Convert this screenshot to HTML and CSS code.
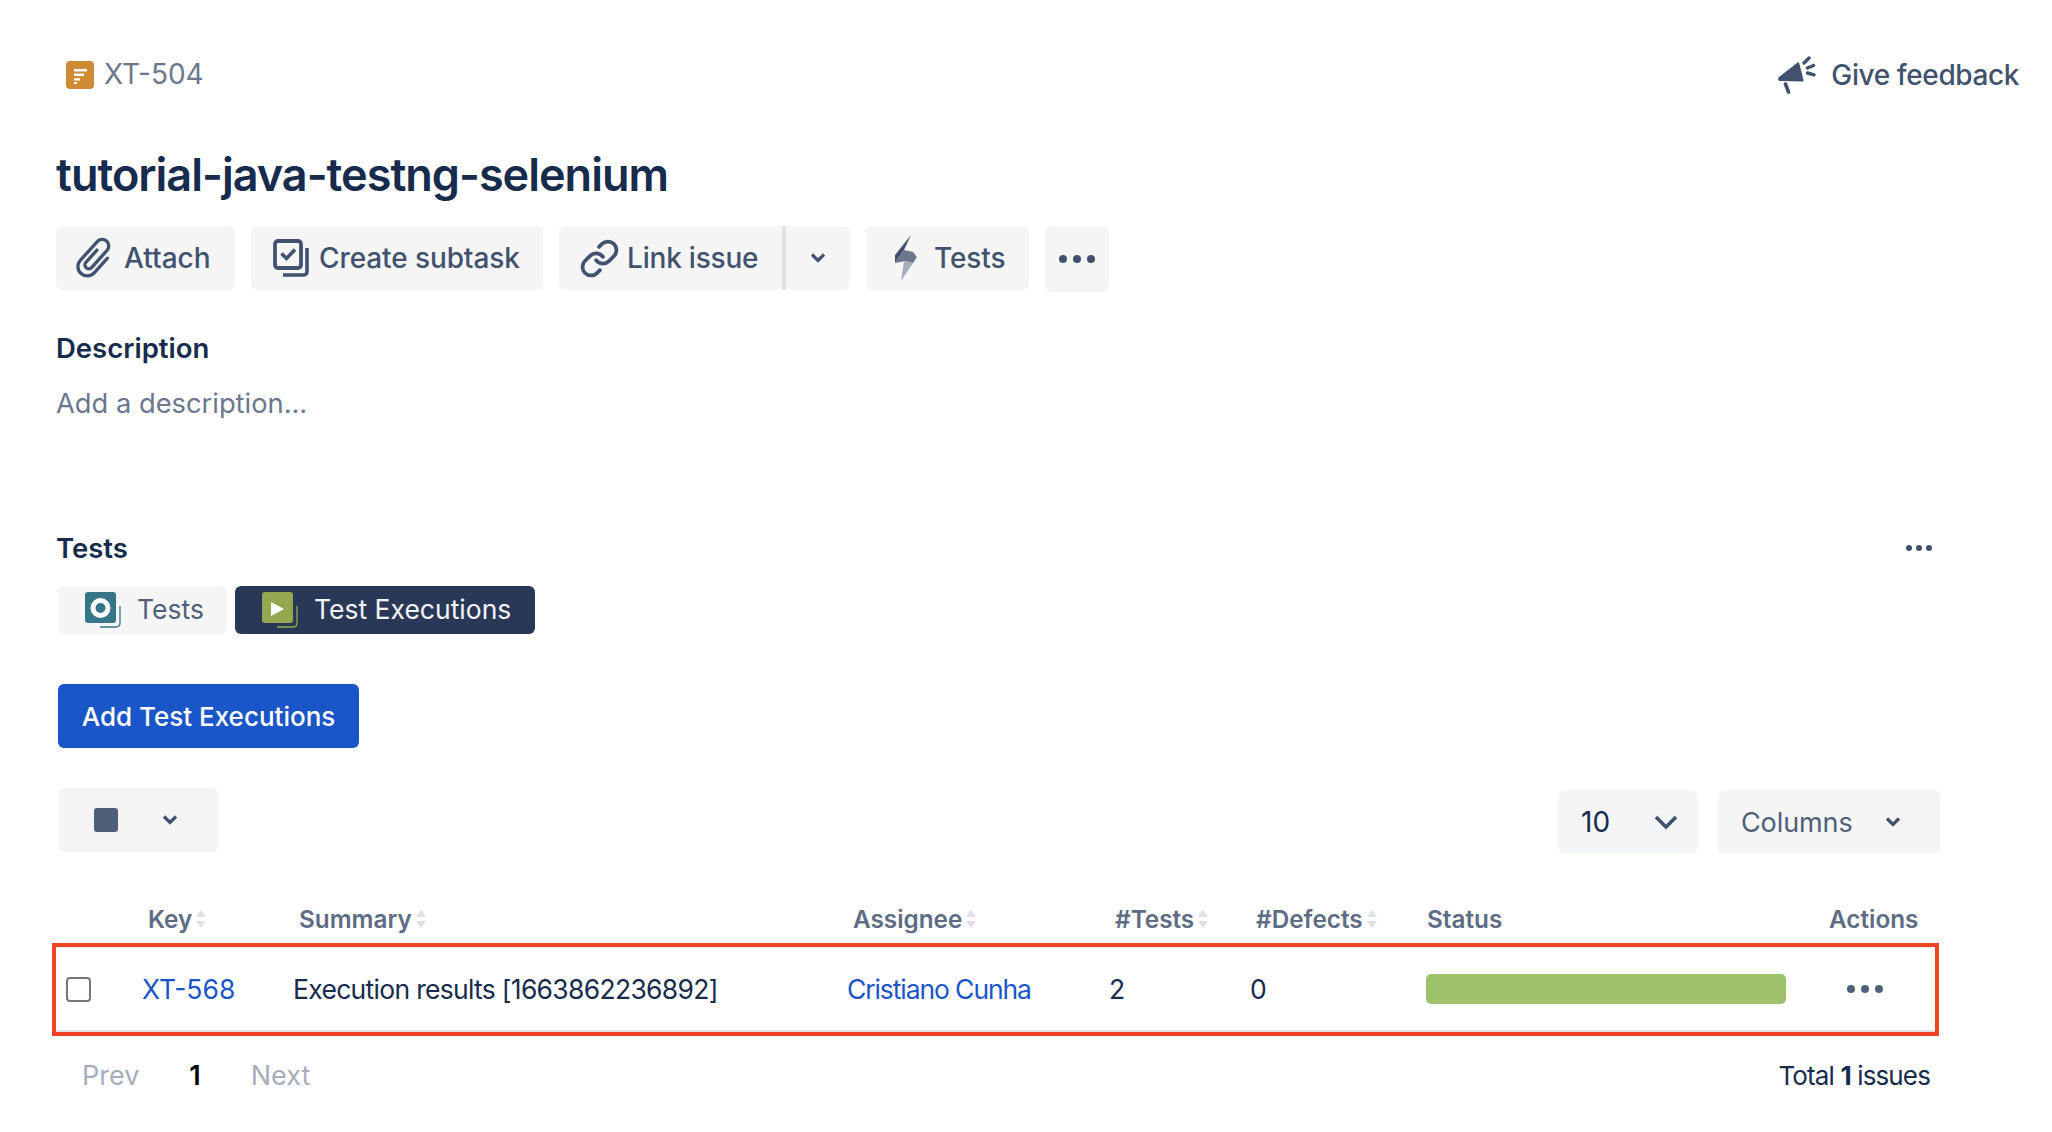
FILE: index.html
```html
<!DOCTYPE html>
<html lang="en">
<head>
<meta charset="utf-8">
<title>XT-504</title>
<link rel="stylesheet" href="styles.css">
</head>
<body>
<div class="page">
  <header class="topbar">
    <div class="crumb">
      <svg class="crumb-icon" viewBox="0 0 28 28"><rect width="28" height="28" rx="4" fill="#cf8a33"/><path d="M8 8h13v2.4H8zM8 12.6h10V15H8zM8 17.2h6v2.4H8zM8 21h3v2H8z" fill="#fff"/></svg>
      <span class="crumb-text">XT-504</span>
    </div>
    <div class="feedback">
      <svg class="feedback-icon" viewBox="0 0 38 38"><path d="M1 21 19 7c1-1 2-.8 2.300.5L25.500 24c.3 1-.2 1.500-1.200 1.500L2.500 25C0 25-.5 22.500 1 21z" fill="#42526e"/><path d="M7.500 28l3 8" stroke="#42526e" stroke-width="3.600" stroke-linecap="round" fill="none"/><path d="M26 7l5-5M29.500 12l6-2.500M29.500 17l6.500 1.800" stroke="#42526e" stroke-width="3.400" stroke-linecap="round" fill="none"/></svg>
      <span>Give feedback</span>
    </div>
  </header>

  <h1 class="title">tutorial-java-testng-selenium</h1>

  <div class="actions">
    <button class="act act-attach">
      <svg class="clip" viewBox="-20 -20 40 40"><g transform="rotate(42)"><path d="M-3.500 -6.500V8.500a3.500 3.500 0 0 0 7 0V-12.500a6 6 0 0 0 -12 0V10.500a8.500 8.500 0 0 0 17 0V-7.500" fill="none" stroke="#42526e" stroke-width="3" stroke-linecap="round"/></g></svg>
      <span>Attach</span>
    </button>
    <button class="act act-sub">
      <svg class="act-icon" viewBox="0 0 38 38"><rect x="3" y="2" width="26" height="27" rx="3" fill="none" stroke="#42526e" stroke-width="3.800"/><path d="M9.500 14.500l5 5 8.500-9" fill="none" stroke="#42526e" stroke-width="3.600"/><path d="M35 9v23c0 3-1 4-4 4H11" fill="none" stroke="#42526e" stroke-width="3.600"/></svg>
      <span>Create subtask</span>
    </button>
    <div class="split">
      <button class="act act-link">
        <svg class="link-icon" viewBox="0 0 24 24"><path d="M10 13a5 5 0 0 0 7.540.54l3-3a5 5 0 0 0-7.070-7.070l-1.720 1.710" fill="none" stroke="#42526e" stroke-width="2.200" stroke-linecap="round"/><path d="M14 11a5 5 0 0 0-7.540-.54l-3 3a5 5 0 0 0 7.070 7.070l1.710-1.710" fill="none" stroke="#42526e" stroke-width="2.200" stroke-linecap="round"/></svg>
        <span>Link issue</span>
      </button>
      <button class="act act-more">
        <svg class="chev-small" viewBox="0 0 16 12"><path d="M2 2.500l6 6 6-6" fill="none" stroke="#42526e" stroke-width="3.200"/></svg>
      </button>
    </div>
    <button class="act act-tests">
      <svg class="bolt" viewBox="0 0 22 46"><path d="M16 0 0 20v8l9-13z" fill="#42526e"/><path d="M0 28 9 15l9 2 4 5-4 6-8-2z" fill="#6b778c"/><path d="M6 46 18 28l-9-2z" fill="#a5adba"/></svg>
      <span>Tests</span>
    </button>
    <button class="act act-dots" aria-label="More">
      <span class="dots"><i></i><i></i><i></i></span>
    </button>
  </div>

  <h2 class="label desc-label">Description</h2>
  <p class="desc">Add a description...</p>

  <div class="tests-head">
    <h2 class="label">Tests</h2>
    <span class="dots dots-small"><i></i><i></i><i></i></span>
  </div>

  <div class="inner">
    <div class="tabs">
      <button class="tab">
        <svg class="tab-icon" viewBox="0 0 36 36"><rect width="31" height="31" rx="3" fill="#377587"/><circle cx="15.500" cy="16" r="7.500" fill="none" stroke="#fff" stroke-width="5"/><path d="M35 14v17c0 3-1 4-4 4H15" fill="none" stroke="#377587" stroke-width="1.300"/></svg>
        <span>Tests</span>
      </button>
      <button class="tab tab-on">
        <svg class="tab-icon" viewBox="0 0 36 36"><rect width="31" height="31" rx="3" fill="#94a84f"/><path d="M9 10l13 7-13 7z" fill="#fff"/><path d="M35 14v17c0 3-1 4-4 4H15" fill="none" stroke="#94a84f" stroke-width="1.300"/></svg>
        <span>Test Executions</span>
      </button>
    </div>

    <button class="add">Add Test Executions</button>

    <div class="toolbar">
      <button class="bulk">
        <span class="bulk-square"></span>
        <svg class="chev-small" viewBox="0 0 16 12"><path d="M2 2.500l6 6 6-6" fill="none" stroke="#42526e" stroke-width="3.200"/></svg>
      </button>
      <div class="toolbar-right">
        <button class="pager-size">
          <span>10</span>
          <svg class="chev-big" viewBox="0 0 24 16"><path d="M2 3l10 10L22 3" fill="none" stroke="#42526e" stroke-width="3.600"/></svg>
        </button>
        <button class="cols">
          <span>Columns</span>
          <svg class="chev-small" viewBox="0 0 16 12"><path d="M2 2.500l6 6 6-6" fill="none" stroke="#42526e" stroke-width="3.200"/></svg>
        </button>
      </div>
    </div>
  </div>

  <div class="grid grid-head">
    <span></span>
    <span class="th">Key<svg class="sort" viewBox="0 0 12 18"><path d="M6 0l5 7H1zM6 18l-5-7h10z" fill="#dfe1e6"/></svg></span>
    <span class="th">Summary<svg class="sort" viewBox="0 0 12 18"><path d="M6 0l5 7H1zM6 18l-5-7h10z" fill="#dfe1e6"/></svg></span>
    <span class="th">Assignee<svg class="sort" viewBox="0 0 12 18"><path d="M6 0l5 7H1zM6 18l-5-7h10z" fill="#dfe1e6"/></svg></span>
    <span class="th">#Tests<svg class="sort" viewBox="0 0 12 18"><path d="M6 0l5 7H1zM6 18l-5-7h10z" fill="#dfe1e6"/></svg></span>
    <span class="th">#Defects<svg class="sort" viewBox="0 0 12 18"><path d="M6 0l5 7H1zM6 18l-5-7h10z" fill="#dfe1e6"/></svg></span>
    <span class="th th-status">Status</span>
    <span class="th th-actions">Actions</span>
  </div>

  <div class="row-frame">
    <div class="grid grid-row">
      <span class="check"></span>
      <a class="link key">XT-568</a>
      <span class="summary">Execution results [1663862236892]</span>
      <a class="link assignee">Cristiano Cunha</a>
      <span class="num">2</span>
      <span class="num">0</span>
      <span class="bar"></span>
      <span class="dots dots-row"><i></i><i></i><i></i></span>
    </div>
  </div>

  <footer class="pagination">
    <div class="pages">
      <span class="off">Prev</span>
      <b class="cur">1</b>
      <span class="off">Next</span>
    </div>
    <div class="total">Total <b>1</b> issues</div>
  </footer>
</div>
</body>
</html>
```

FILE: styles.css
```css
* { box-sizing: border-box; }
html, body { margin: 0; background: #fff; }
body { font-family: Inter, "Liberation Sans", sans-serif; color: #172b4d; overflow: hidden; }
button { font: inherit; border: 0; padding: 0; margin: 0; }
h1, h2, p { margin: 0; }

.page { width: 2052px; height: 1132px; padding: 56px 33px 0 56px; }

.topbar { display: flex; justify-content: space-between; align-items: center; height: 38px; padding-left: 10px; }
.crumb { display: flex; align-items: center; gap: 10px; font-size: 28px; color: #6b778c; }
.crumb-text { padding-bottom: 2px; }
.crumb-icon { width: 28px; height: 28px; }
.feedback { display: flex; align-items: center; gap: 15px; font-size: 28px; font-weight: 500; color: #42526e; letter-spacing: -0.4px; }
.feedback-icon { width: 38px; height: 38px; }

.title { font-size: 45px; line-height: 60px; font-weight: 600; margin-top: 51px; color: #172b4d; letter-spacing: -1px; }

.actions { display: flex; align-items: flex-start; gap: 16px; margin-top: 21px; }
.act { display: flex; align-items: center; height: 64px; background: #f5f5f6; color: #42526e; font-size: 28px; font-weight: 500; border-radius: 6px; }
.act-icon { width: 38px; height: 38px; }
.clip { width: 44px; height: 44px; }
.link-icon { width: 41px; height: 41px; }
.act-attach { width: 179px; padding-left: 17px; gap: 7px; }
.act-sub { width: 292px; padding-left: 21px; gap: 9px; letter-spacing: -0.1px; }
.split { display: flex; }
.act-link { width: 223px; padding-left: 20px; gap: 7px; letter-spacing: -0.2px; border-radius: 6px 0 0 6px; }
.act-more { width: 68px; justify-content: center; border-left: 4px solid #dfe1e6; border-radius: 0 6px 6px 0; }
.act-tests { width: 163px; padding-left: 29px; gap: 17px; letter-spacing: -0.1px; }
.bolt { width: 22px; height: 46px; }
.act-dots { width: 64px; height: 66px; justify-content: center; }
.chev-small { width: 16px; height: 12px; }
.chev-big { width: 24px; height: 16px; }

.dots { display: inline-flex; gap: 6px; }
.dots i { width: 8px; height: 8px; border-radius: 50%; background: #42526e; }
.dots-small { gap: 4px; margin-right: 2px; }
.dots-small i { width: 6px; height: 6px; }
.dots-row i { background: #505f79; }

.label { font-size: 27.5px; line-height: 32px; font-weight: 600; color: #172b4d; }
.desc-label { margin-top: 40px; }
.desc { font-size: 27.3px; line-height: 34px; color: #6b778c; margin-top: 23px; }

.tests-head { display: flex; justify-content: space-between; align-items: center; width: 1878px; margin-top: 111px; }

.inner { padding-left: 2px; width: 1884px; }
.tabs { display: flex; gap: 8px; margin-top: 22px; }
.tab { display: flex; align-items: center; height: 48px; border-radius: 6px; background: #f5f5f6; color: #505f79; font-size: 26.5px; }
.tab span { padding-bottom: 2px; }
.tab:first-child { width: 169px; padding-left: 27px; gap: 16px; }
.tab-on { width: 300px; padding-left: 27px; gap: 16px; background: #2a3858; color: #f4f5f7; }
.tab-icon { width: 36px; height: 36px; }

.add { display: block; width: 301px; height: 64px; margin-top: 50px; background: #1a56c8; color: #fff; border-radius: 6px; font-size: 26px; font-weight: 500; }

.toolbar { display: flex; justify-content: space-between; align-items: flex-start; margin-top: 40px; }
.bulk { display: flex; align-items: center; width: 160px; height: 64px; padding-left: 36px; gap: 44px; background: #f5f5f6; border-radius: 6px; }
.bulk-square { width: 24px; height: 24px; background: #505f79; border-radius: 3px; }
.toolbar-right { display: flex; gap: 20px; margin-top: 2px; }
.pager-size { display: flex; align-items: center; width: 140px; height: 64px; padding-left: 23px; gap: 44px; background: #f4f5f7; color: #172b4d; font-size: 28px; border-radius: 6px; }
.cols { display: flex; align-items: center; width: 222px; height: 64px; padding-left: 23px; gap: 32px; background: #f5f5f6; color: #505f79; font-size: 27px; letter-spacing: -0.1px; border-radius: 6px; }

.grid { display: grid; grid-template-columns: 86px 151px 554px 262px 141px 176px 421px 88px; align-items: center; }
.grid-head { height: 32px; margin-top: 49px; }
.th { display: flex; align-items: center; gap: 3px; padding-left: 6px; font-size: 24.3px; font-weight: 600; color: #5e6c84; white-space: nowrap; }
.th-status { padding-left: 1px; }
.th-actions { padding-left: 0; margin-left: -18px; }
.sort { width: 12px; height: 18px; }

.row-frame { width: 1887px; height: 93px; margin: 8px 0 0 -4px; border: 4px solid #ee4324; }
.grid-row { height: 85px; font-size: 26.500px; border-top: 1px solid #ebecf0; border-bottom: 2px solid #dfe1e6; }
.check { width: 25px; height: 25px; margin-left: 10px; border: 2px solid #767676; border-radius: 4px; background: #fff; }
.link { color: #1a56c8; }
.summary { letter-spacing: -0.7px; color: #172b4d; white-space: nowrap; }
.assignee { letter-spacing: -1.1px; white-space: nowrap; }
.bar { width: 360px; height: 30px; background: #a0c16c; border-radius: 5px; }

.pagination { display: flex; justify-content: space-between; align-items: center; height: 34px; margin-top: 22px; width: 1874px; }
.pages { display: flex; align-items: center; font-size: 27px; padding-left: 26px; }
.off { color: #a5adba; }
.cur { margin: 0 50px 0 50px; color: #000; font-weight: 600; }
.total { font-size: 26px; letter-spacing: -0.87px; color: #172b4d; }
.total b { font-weight: 700; }
```
